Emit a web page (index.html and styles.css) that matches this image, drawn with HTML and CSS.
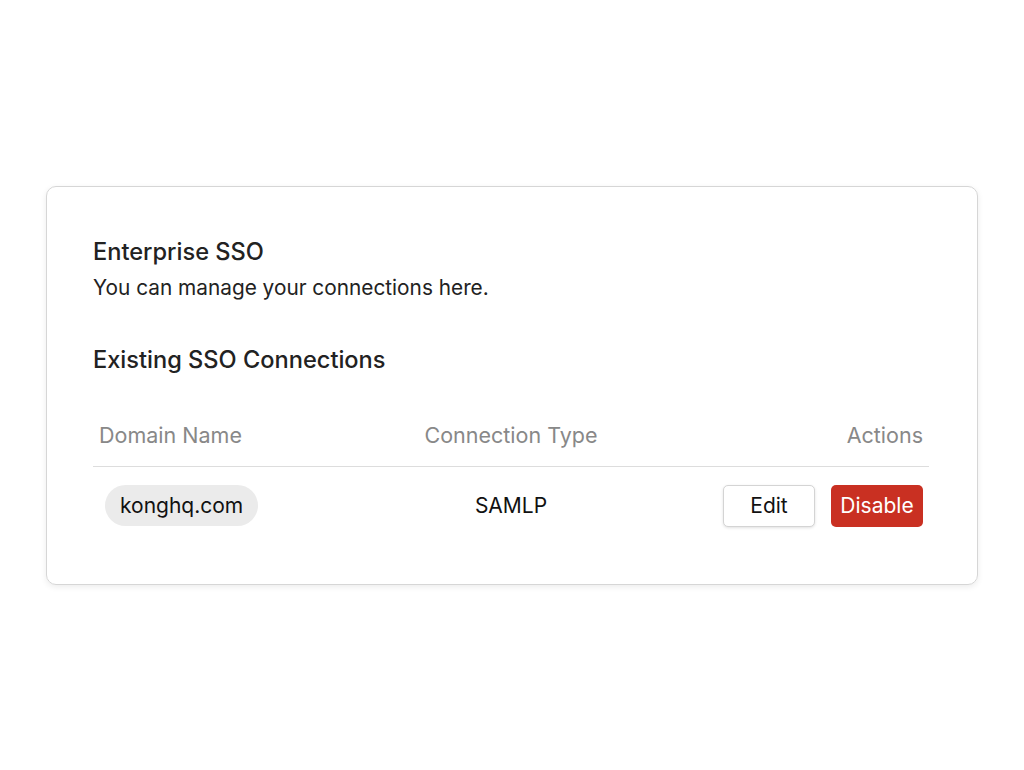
FILE: index.html
```html
<!DOCTYPE html>
<html lang="en">
<head>
    <meta charset="UTF-8">
    <meta name="viewport" content="width=device-width, initial-scale=1.0">
    <title>Enterprise SSO</title>
    <link rel="stylesheet" href="styles.css">
</head>
<body>
    <div class="card">
        <h2 class="card-title">Enterprise SSO</h2>
        <p class="card-subtitle">You can manage your connections here.</p>

        <h3 class="section-title">Existing SSO Connections</h3>

        <table class="sso-table">
            <thead>
                <tr>
                    <th class="col-domain">Domain Name</th>
                    <th class="col-type">Connection Type</th>
                    <th class="col-actions">Actions</th>
                </tr>
            </thead>
            <tbody>
                <tr>
                    <td class="col-domain"><span class="domain-pill">konghq.com</span></td>
                    <td class="col-type">SAMLP</td>
                    <td class="col-actions">
                        <div class="actions">
                            <button class="btn btn-edit">Edit</button>
                            <button class="btn btn-disable">Disable</button>
                        </div>
                    </td>
                </tr>
            </tbody>
        </table>
    </div>
</body>
</html>
```

FILE: styles.css
```css
body {
    margin: 0;
    min-height: 100vh;
    display: flex;
    align-items: center;
    justify-content: center;
    background: #fff;
    font-family: Inter, "Noto Sans", sans-serif;
    color: #222;
}

.card {
    width: 932px;
    box-sizing: border-box;
    padding: 49px 48px 57px 46px;
    border: 1px solid #d6d6d6;
    border-radius: 10px;
    box-shadow: 0 2px 6px rgba(0, 0, 0, 0.08);
}

.card-title {
    margin: 0;
    font-size: 23.6px;
    font-weight: 500;
    line-height: 32px;
}

.card-subtitle {
    margin: 5px 0 0;
    font-size: 20.8px;
    line-height: 30px;
}

.section-title {
    margin: 41px 0 0;
    font-size: 23.6px;
    font-weight: 500;
    line-height: 32px;
}

.sso-table {
    width: 100%;
    margin-top: 46px;
    border-collapse: collapse;
    table-layout: fixed;
}

.sso-table th {
    font-size: 21.5px;
    font-weight: 400;
    color: #888;
    padding: 0 6px 18px;
    border-bottom: 1px solid #ddd;
}

.sso-table td {
    font-size: 21px;
    padding: 18px 6px 0;
    color: #111;
}

.col-domain { text-align: left; }
.col-type { text-align: center; }
.col-actions { text-align: right; }

.domain-pill {
    display: inline-block;
    margin-left: 6px;
    padding: 0 15px;
    line-height: 41px;
    border-radius: 21px;
    background: #ebebeb;
}

.actions {
    display: flex;
    justify-content: flex-end;
    gap: 16px;
}

.btn {
    width: 92px;
    height: 42px;
    font-family: inherit;
    font-size: 21px;
    border-radius: 5px;
    cursor: pointer;
}

.btn-edit {
    background: #fff;
    color: #111;
    border: 1px solid #d4d4d4;
    box-shadow: 0 1px 3px rgba(0, 0, 0, 0.12);
}

.btn-disable {
    background: #c93022;
    color: #fff;
    border: none;
}
```
